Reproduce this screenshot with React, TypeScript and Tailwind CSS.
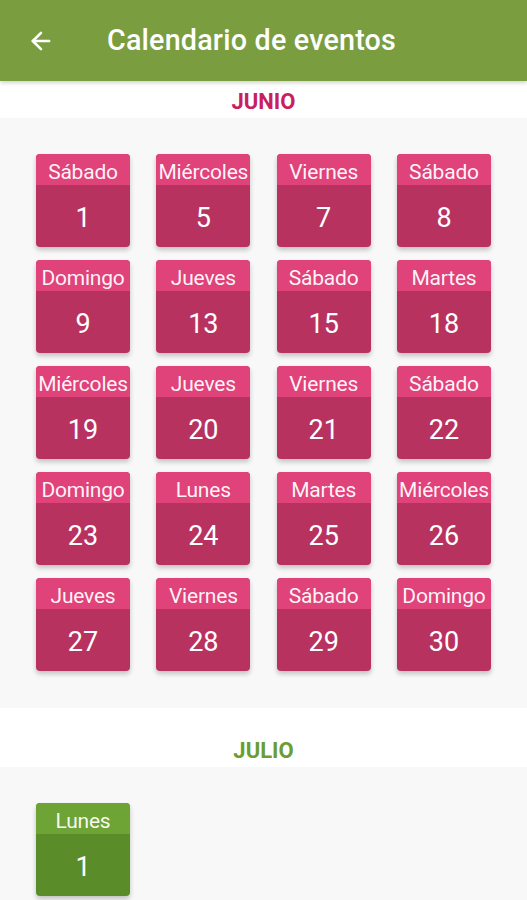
import { ArrowLeft } from 'lucide-react';

interface DayCardProps {
  day: string;
  num: number;
  green?: boolean;
}

const junio: Array<[string, number]> = [
  ['Sábado', 1], ['Miércoles', 5], ['Viernes', 7], ['Sábado', 8],
  ['Domingo', 9], ['Jueves', 13], ['Sábado', 15], ['Martes', 18],
  ['Miércoles', 19], ['Jueves', 20], ['Viernes', 21], ['Sábado', 22],
  ['Domingo', 23], ['Lunes', 24], ['Martes', 25], ['Miércoles', 26],
  ['Jueves', 27], ['Viernes', 28], ['Sábado', 29], ['Domingo', 30],
];

function DayCard({ day, num, green }: DayCardProps) {
  return (
    <div
      className={`w-[94px] h-[93px] rounded-[4px] overflow-hidden flex flex-col shadow-[0_3px_5px_rgba(0,0,0,0.22)] ${
        green ? 'bg-[#5b8c2a]' : 'bg-[#b8325f]'
      }`}
    >
      <div
        className={`h-[31px] flex items-center justify-center text-[21px] leading-none text-white/95 tracking-[-0.2px] pt-[6px] ${
          green ? 'bg-[#6ea336]' : 'bg-[#e0437a]'
        }`}
      >
        {day}
      </div>
      <div className="flex-1 flex items-center justify-center text-[27px] leading-none text-white pt-[4px]">
        {num}
      </div>
    </div>
  );
}

export default function App() {
  return (
    <div className="w-[527px] h-[900px] overflow-hidden bg-[#f8f8f8] font-['Roboto',sans-serif]">
      {/* Toolbar */}
      <div className="relative z-10 h-[81px] bg-[#7a9e3f] flex items-center shadow-[0_2px_4px_rgba(0,0,0,0.18)]">
        <ArrowLeft className="ml-[27px] w-[28px] h-[28px] text-white" strokeWidth={2.2} />
        <div className="ml-[52px] text-[28.7px] font-medium text-white tracking-[0.2px]">
          Calendario de eventos
        </div>
      </div>

      {/* Junio */}
      <div className="h-[37px] bg-white flex items-center justify-center text-[22px] font-bold text-[#c8205f] pt-[4px]">
        JUNIO
      </div>
      <div className="px-[36px] pt-[36px] pb-[37px] grid grid-cols-[repeat(4,94px)] justify-between gap-y-[13px] bg-[#f8f8f8]">
        {junio.map(([d, n], i) => (
          <DayCard key={i} day={d} num={n} />
        ))}
      </div>

      {/* Julio */}
      <div className="h-[59px] bg-white flex items-center justify-center text-[22px] font-bold text-[#6a9e2f] pt-[26px]">
        JULIO
      </div>
      <div className="px-[36px] pt-[36px] pb-[30px] bg-[#f8f8f8]">
        <DayCard day="Lunes" num={1} green />
      </div>
    </div>
  );
}
